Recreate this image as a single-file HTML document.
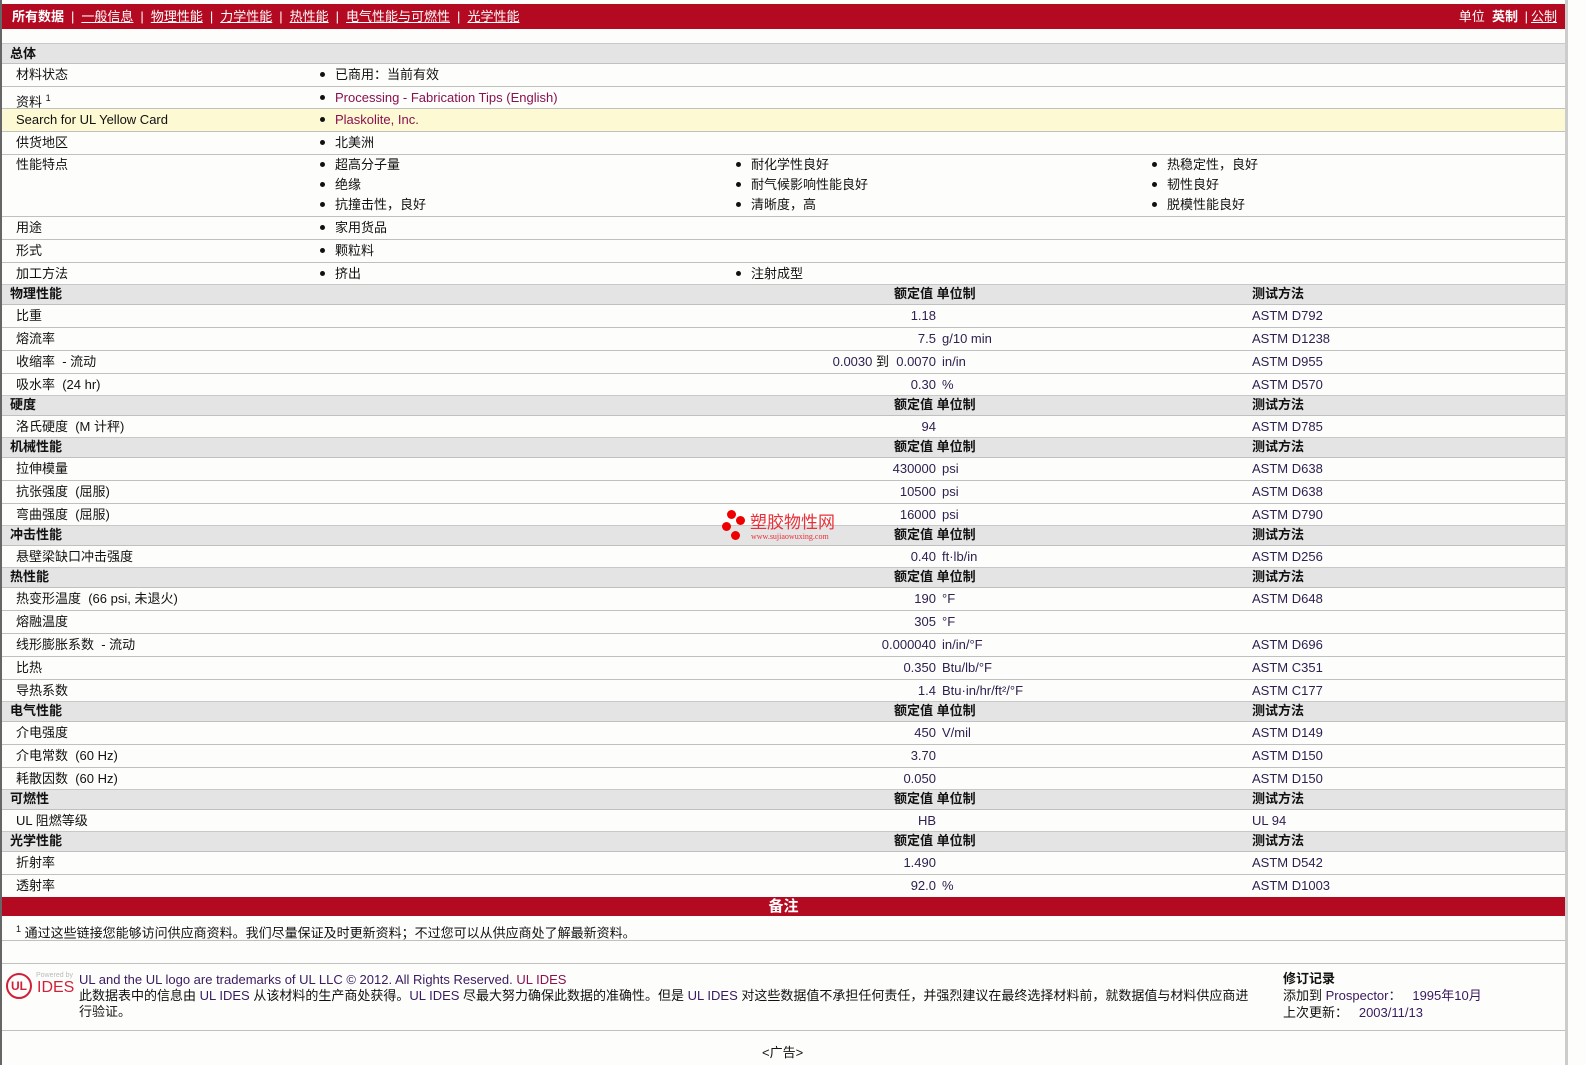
<!DOCTYPE html>
<html><head><meta charset="utf-8"><style>
body{margin:0;width:1586px;height:1065px;background:#fdfefc;font-family:"Liberation Sans","Noto Sans CJK SC",sans-serif;font-size:13px;color:#111;position:relative;overflow:hidden}
.bar{position:absolute;left:2px;top:4px;width:1563px;height:25px;background:#b30a22;color:#fff;font-size:13px;line-height:25px}
.bar a{color:#fff;text-decoration:underline}
.bar .s{margin:0 7px}
.r{position:absolute;left:2px;width:1563px;border-bottom:1px solid #c0c0c0;box-sizing:border-box}
.h{background:#e4e4e4;font-weight:bold;border-top:1px solid #c8c8c8}
.r span{position:absolute;white-space:nowrap}
.l{left:14px}.hl{left:8px}
.b{left:318px}.b2{left:734px}.b3{left:1150px}
.b::before,.b2::before,.b3::before{content:"";display:inline-block;width:5px;height:5px;border-radius:50%;background:#111;margin-right:10px;vertical-align:middle;position:relative;top:-1px}
.v{right:629px;color:#302050}.u{left:940px;color:#302050}.t{left:1250px;color:#302050}
.lk{color:#8a1050}
.yel{background:#fdf9d2}
</style></head><body>
<div style="position:absolute;left:0;top:0;width:2px;height:1065px;background:#666"></div>
<div style="position:absolute;left:1565px;top:0;width:3px;height:1065px;background:#ccc"></div>
<div class="bar"><span style="position:absolute;left:10px"><b>所有数据</b><span class="s">|</span><a>一般信息</a><span class="s">|</span><a>物理性能</a><span class="s">|</span><a>力学性能</a><span class="s">|</span><a>热性能</a><span class="s">|</span><a>电气性能与可燃性</a><span class="s">|</span><a>光学性能</a></span><span style="position:absolute;right:8px">单位 &nbsp;<b>英制</b> <span class="s" style="margin:0 3px">|</span><a>公制</a></span></div>

<div class="r h" style="top:43px;height:21px;line-height:19px"><span class="hl">总体</span></div>
<div class="r" style="top:64px;height:23px;line-height:22px"><span class="l">材料状态</span><span class="b">已商用：当前有效</span></div>
<div class="r" style="top:87px;height:22px;line-height:22px"><span class="l">资料 <sup style="font-size:9px">1</sup></span><span class="b lk">Processing - Fabrication Tips (English)</span></div>
<div class="r yel" style="top:109px;height:23px;line-height:22px"><span class="l">Search for UL Yellow Card</span><span class="b lk">Plaskolite, Inc.</span></div>
<div class="r" style="top:132px;height:23px;line-height:22px"><span class="l">供货地区</span><span class="b">北美洲</span></div>
<div class="r" style="top:155px;height:62px;line-height:20px"><span class="l">性能特点</span>
<span class="b" style="top:0">超高分子量</span><span class="b" style="top:20px">绝缘</span><span class="b" style="top:40px">抗撞击性，良好</span>
<span class="b2" style="top:0">耐化学性良好</span><span class="b2" style="top:20px">耐气候影响性能良好</span><span class="b2" style="top:40px">清晰度，高</span>
<span class="b3" style="top:0">热稳定性，良好</span><span class="b3" style="top:20px">韧性良好</span><span class="b3" style="top:40px">脱模性能良好</span></div>
<div class="r" style="top:217px;height:23px;line-height:22px"><span class="l">用途</span><span class="b">家用货品</span></div>
<div class="r" style="top:240px;height:23px;line-height:22px"><span class="l">形式</span><span class="b">颗粒料</span></div>
<div class="r" style="top:263px;height:22px;line-height:22px"><span class="l">加工方法</span><span class="b">挤出</span><span class="b2">注射成型</span></div>

<div class="r h" style="top:284px;height:21px;line-height:17px"><span class="hl">物理性能</span><span style="left:892px">额定值 单位制</span><span style="left:1250px">测试方法</span></div>
<div class="r" style="top:305px;height:23px;line-height:22px"><span class="l">比重</span><span class="v">1.18</span><span class="t">ASTM D792</span></div>
<div class="r" style="top:328px;height:23px;line-height:22px"><span class="l">熔流率</span><span class="v">7.5</span><span class="u">g/10 min</span><span class="t">ASTM D1238</span></div>
<div class="r" style="top:351px;height:23px;line-height:22px"><span class="l">收缩率 &nbsp;- 流动</span><span class="v">0.0030 <span style="position:static;color:#111">到</span>&nbsp; 0.0070</span><span class="u">in/in</span><span class="t">ASTM D955</span></div>
<div class="r" style="top:374px;height:22px;line-height:22px"><span class="l">吸水率 &nbsp;(24 hr)</span><span class="v">0.30</span><span class="u">%</span><span class="t">ASTM D570</span></div>

<div class="r h" style="top:395px;height:21px;line-height:17px"><span class="hl">硬度</span><span style="left:892px">额定值 单位制</span><span style="left:1250px">测试方法</span></div>
<div class="r" style="top:416px;height:22px;line-height:22px"><span class="l">洛氏硬度 &nbsp;(M 计秤)</span><span class="v">94</span><span class="t">ASTM D785</span></div>

<div class="r h" style="top:437px;height:21px;line-height:17px"><span class="hl">机械性能</span><span style="left:892px">额定值 单位制</span><span style="left:1250px">测试方法</span></div>
<div class="r" style="top:458px;height:23px;line-height:22px"><span class="l">拉伸模量</span><span class="v">430000</span><span class="u">psi</span><span class="t">ASTM D638</span></div>
<div class="r" style="top:481px;height:23px;line-height:22px"><span class="l">抗张强度 &nbsp;(屈服)</span><span class="v">10500</span><span class="u">psi</span><span class="t">ASTM D638</span></div>
<div class="r" style="top:504px;height:22px;line-height:22px"><span class="l">弯曲强度 &nbsp;(屈服)</span><span class="v">16000</span><span class="u">psi</span><span class="t">ASTM D790</span></div>

<div class="r h" style="top:525px;height:21px;line-height:17px"><span class="hl">冲击性能</span><span style="left:892px">额定值 单位制</span><span style="left:1250px">测试方法</span></div>
<div class="r" style="top:546px;height:22px;line-height:22px"><span class="l">悬壁梁缺口冲击强度</span><span class="v">0.40</span><span class="u">ft·lb/in</span><span class="t">ASTM D256</span></div>

<div class="r h" style="top:567px;height:21px;line-height:17px"><span class="hl">热性能</span><span style="left:892px">额定值 单位制</span><span style="left:1250px">测试方法</span></div>
<div class="r" style="top:588px;height:23px;line-height:22px"><span class="l">热变形温度 &nbsp;(66 psi, 未退火)</span><span class="v">190</span><span class="u">°F</span><span class="t">ASTM D648</span></div>
<div class="r" style="top:611px;height:23px;line-height:22px"><span class="l">熔融温度</span><span class="v">305</span><span class="u">°F</span></div>
<div class="r" style="top:634px;height:23px;line-height:22px"><span class="l">线形膨胀系数 &nbsp;- 流动</span><span class="v">0.000040</span><span class="u">in/in/°F</span><span class="t">ASTM D696</span></div>
<div class="r" style="top:657px;height:23px;line-height:22px"><span class="l">比热</span><span class="v">0.350</span><span class="u">Btu/lb/°F</span><span class="t">ASTM C351</span></div>
<div class="r" style="top:680px;height:22px;line-height:22px"><span class="l">导热系数</span><span class="v">1.4</span><span class="u">Btu·in/hr/ft²/°F</span><span class="t">ASTM C177</span></div>

<div class="r h" style="top:701px;height:21px;line-height:17px"><span class="hl">电气性能</span><span style="left:892px">额定值 单位制</span><span style="left:1250px">测试方法</span></div>
<div class="r" style="top:722px;height:23px;line-height:22px"><span class="l">介电强度</span><span class="v">450</span><span class="u">V/mil</span><span class="t">ASTM D149</span></div>
<div class="r" style="top:745px;height:23px;line-height:22px"><span class="l">介电常数 &nbsp;(60 Hz)</span><span class="v">3.70</span><span class="t">ASTM D150</span></div>
<div class="r" style="top:768px;height:22px;line-height:22px"><span class="l">耗散因数 &nbsp;(60 Hz)</span><span class="v">0.050</span><span class="t">ASTM D150</span></div>

<div class="r h" style="top:789px;height:21px;line-height:17px"><span class="hl">可燃性</span><span style="left:892px">额定值 单位制</span><span style="left:1250px">测试方法</span></div>
<div class="r" style="top:810px;height:22px;line-height:22px"><span class="l">UL 阻燃等级</span><span class="v">HB</span><span class="t">UL 94</span></div>

<div class="r h" style="top:831px;height:21px;line-height:17px"><span class="hl">光学性能</span><span style="left:892px">额定值 单位制</span><span style="left:1250px">测试方法</span></div>
<div class="r" style="top:852px;height:23px;line-height:22px"><span class="l">折射率</span><span class="v">1.490</span><span class="t">ASTM D542</span></div>
<div class="r" style="top:875px;height:22px;line-height:22px;border:none"><span class="l">透射率</span><span class="v">92.0</span><span class="u">%</span><span class="t">ASTM D1003</span></div>

<div style="position:absolute;left:2px;top:897px;width:1563px;height:19px;background:#b30a22;color:#fff;font-weight:bold;font-size:15px;text-align:center;line-height:19px">备注</div>
<div class="r" style="top:917px;height:24px;line-height:24px"><span class="l"><sup style="font-size:9px">1</sup> 通过这些链接您能够访问供应商资料。我们尽量保证及时更新资料；不过您可以从供应商处了解最新资料。</span></div>
<div class="r" style="top:941px;height:23px"></div>

<div style="position:absolute;left:6px;top:973px;width:26px;height:26px;border:2px solid #d0213a;border-radius:50%;box-sizing:border-box;color:#d0213a;font-size:12px;font-weight:bold;text-align:center;line-height:22px">UL</div>
<div style="position:absolute;left:36px;top:972px;font-size:7px;color:#bbb">Powered by</div>
<div style="position:absolute;left:37px;top:979px;font-size:16px;color:#d0213a">IDES</div>
<div style="position:absolute;left:79px;top:972px;line-height:16px;width:1180px">
<span style="color:#3a1a60">UL and the UL logo are trademarks of UL LLC © 2012. All Rights Reserved. <span class="lk">UL IDES</span></span><br>
此数据表中的信息由 <span style="color:#3a1a60">UL IDES</span> 从该材料的生产商处获得。<span style="color:#3a1a60">UL IDES</span> 尽最大努力确保此数据的准确性。但是 <span style="color:#3a1a60">UL IDES</span> 对这些数据值不承担任何责任，并强烈建议在最终选择材料前，就数据值与材料供应商进行验证。</div>
<div style="position:absolute;left:1283px;top:970px;line-height:17px"><b style="font-size:13px">修订记录</b><br>添加到 <span style="color:#3a1a60">Prospector：</span> &nbsp; <span style="color:#3a1a60">1995年10月</span><br>上次更新： &nbsp; <span style="color:#3a1a60">2003/11/13</span></div>
<div class="r" style="top:1030px;height:1px"></div>
<div style="position:absolute;left:762px;top:1042px">&lt;广告&gt;</div>

<div style="position:absolute;left:727px;top:510px;width:9px;height:9px;border-radius:50%;background:#e00"></div>
<div style="position:absolute;left:736px;top:516px;width:9px;height:9px;border-radius:50%;background:#e00"></div>
<div style="position:absolute;left:722px;top:522px;width:9px;height:9px;border-radius:50%;background:#e00"></div>
<div style="position:absolute;left:731px;top:531px;width:9px;height:9px;border-radius:50%;background:#e00"></div>
<div style="position:absolute;left:750px;top:513px;color:#e8303a;font-size:17px;line-height:20px">塑胶物性网</div>
<div style="position:absolute;left:751px;top:532px;color:#e8303a;font-size:8px;font-family:'Liberation Serif',serif">www.sujiaowuxing.com</div>
</body></html>
